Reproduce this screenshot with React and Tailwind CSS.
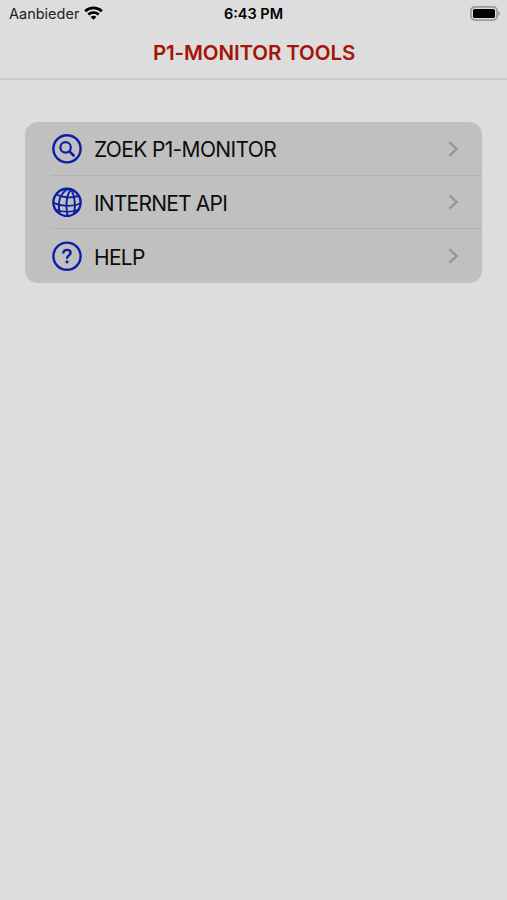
import React from "react";

const SearchIcon = () => (
  <svg className="w-[30px] h-[30px]" viewBox="0 0 30 30" fill="none" stroke="#0b1fa5" strokeLinecap="round">
    <circle cx="15" cy="14.8" r="13.6" strokeWidth="2.4" />
    <circle cx="13.6" cy="13.4" r="5.2" strokeWidth="2.2" />
    <path d="M17.5 17.4L21.6 21.5" strokeWidth="2.6" />
  </svg>
);

const GlobeIcon = () => (
  <svg className="w-[30px] h-[30px]" viewBox="0 0 30 30" fill="none" stroke="#0b1fa5" strokeWidth="1.9" strokeLinecap="round">
    <circle cx="15" cy="15.4" r="13.6" strokeWidth="2.4" />
    <path d="M15.5 2.2C8 6.5 5.5 14 7.5 25.5" />
    <path d="M18.5 2.2C14.5 9 13.5 19 15.5 28.5" />
    <path d="M19 2.2C22.5 8 24 18 22 26.5" />
    <path d="M4.5 7.5C10 10.5 19 11.5 26.5 9" />
    <path d="M1.5 15.8C9 19.5 21 20 28.5 16.5" />
    <path d="M4 22.8C10 25.2 20 25.6 26 22.8" strokeWidth="1.7" />
  </svg>
);

const HelpIcon = () => (
  <svg className="w-[30px] h-[30px]" viewBox="0 0 30 30" fill="none" stroke="#0b1fa5" strokeLinecap="round">
    <circle cx="15" cy="15.2" r="13.6" strokeWidth="2.4" />
    <path d="M11.4 11.6C11.6 9.6 12.9 8.9 15 8.9C17.2 8.9 18.6 10 18.6 11.8C18.6 14.4 15.1 14.4 15.1 16.8" strokeWidth="2.4" />
    <circle cx="15" cy="20.8" r="1.6" fill="#0b1fa5" stroke="none" />
  </svg>
);

const WifiIcon = () => (
  <svg className="w-[19px] h-[15px]" viewBox="0 0 19 15" fill="none" stroke="#000">
    <path d="M1.2 5.2C5.8 0.8 13.2 0.8 17.8 5.2" strokeWidth="2.8" />
    <path d="M4.3 8.5C7.2 5.8 11.8 5.8 14.7 8.5" strokeWidth="2.5" />
    <path d="M9.5 13.8L6.6 10.9C8.2 9.4 10.8 9.4 12.4 10.9Z" fill="#000" stroke="none" />
  </svg>
);

const BatteryIcon = () => (
  <svg className="w-[31px] h-[15px]" viewBox="0 0 31 15">
    <rect x="0.9" y="0.9" width="26.2" height="13.2" rx="4" fill="none" stroke="#999" strokeWidth="1.7" />
    <rect x="3" y="3" width="22" height="9" rx="1.6" fill="#000" />
    <path d="M28.4 5.2C30.7 6 30.7 9 28.4 9.8Z" fill="#999" />
  </svg>
);

const items = [
  { label: "ZOEK P1-MONITOR", icon: <SearchIcon />, text: "pt-[2px] tracking-[-0.65px]", row: "h-[54px] border-b border-[#b3b3b3]" },
  { label: "INTERNET API", icon: <GlobeIcon />, text: "pt-[3px] tracking-[-0.8px]", row: "h-[53px] border-b border-[#b3b3b3]" },
  { label: "HELP", icon: <HelpIcon />, text: "pt-[3px] tracking-[-0.7px]", row: "h-[54px]" },
];

const App = () => {
  return (
    <div className="w-full h-screen bg-[#dddddd] font-['Inter',sans-serif] overflow-hidden">
      <header className="h-[80px] border-b-2 border-[#cccccc]">
        {/* Status bar */}
        <div className="h-[27px] grid grid-cols-3 items-center pl-[9px] pr-[6px]">
          <div className="flex items-center gap-[5px]">
            <span className="text-[14.5px] text-[#222222]">Aanbieder</span>
            <WifiIcon />
          </div>
          <span className="pr-[3px] text-center text-[14.5px] font-semibold text-black">6:43 PM</span>
          <div className="flex justify-end">
            <BatteryIcon />
          </div>
        </div>

        <h1 className="h-[51px] pt-px pl-px flex items-center justify-center text-[20.5px] font-semibold tracking-[-0.1px] text-[#a51407]">
          P1-MONITOR TOOLS
        </h1>
      </header>

      {/* Menu */}
      <ul className="mt-[42px] mx-[25px] rounded-[13px] bg-[#c0c0c0] overflow-hidden">
        {items.map((item) => (
          <li key={item.label} className="pl-[26px]">
            <button type="button" className={`w-full flex items-center pr-[23px] ${item.row}`}>
              <span className="ml-px mr-3">{item.icon}</span>
              <span className={`text-[21px] text-[#0c0c0c] ${item.text}`}>{item.label}</span>
              <svg className="ml-auto w-[11px] h-[16px]" viewBox="0 0 11 16" fill="none" stroke="#959595" strokeWidth="2.3">
                <path d="M1.5 1.3L8.7 8L1.5 14.7" />
              </svg>
            </button>
          </li>
        ))}
      </ul>
    </div>
  );
};

export default App;
